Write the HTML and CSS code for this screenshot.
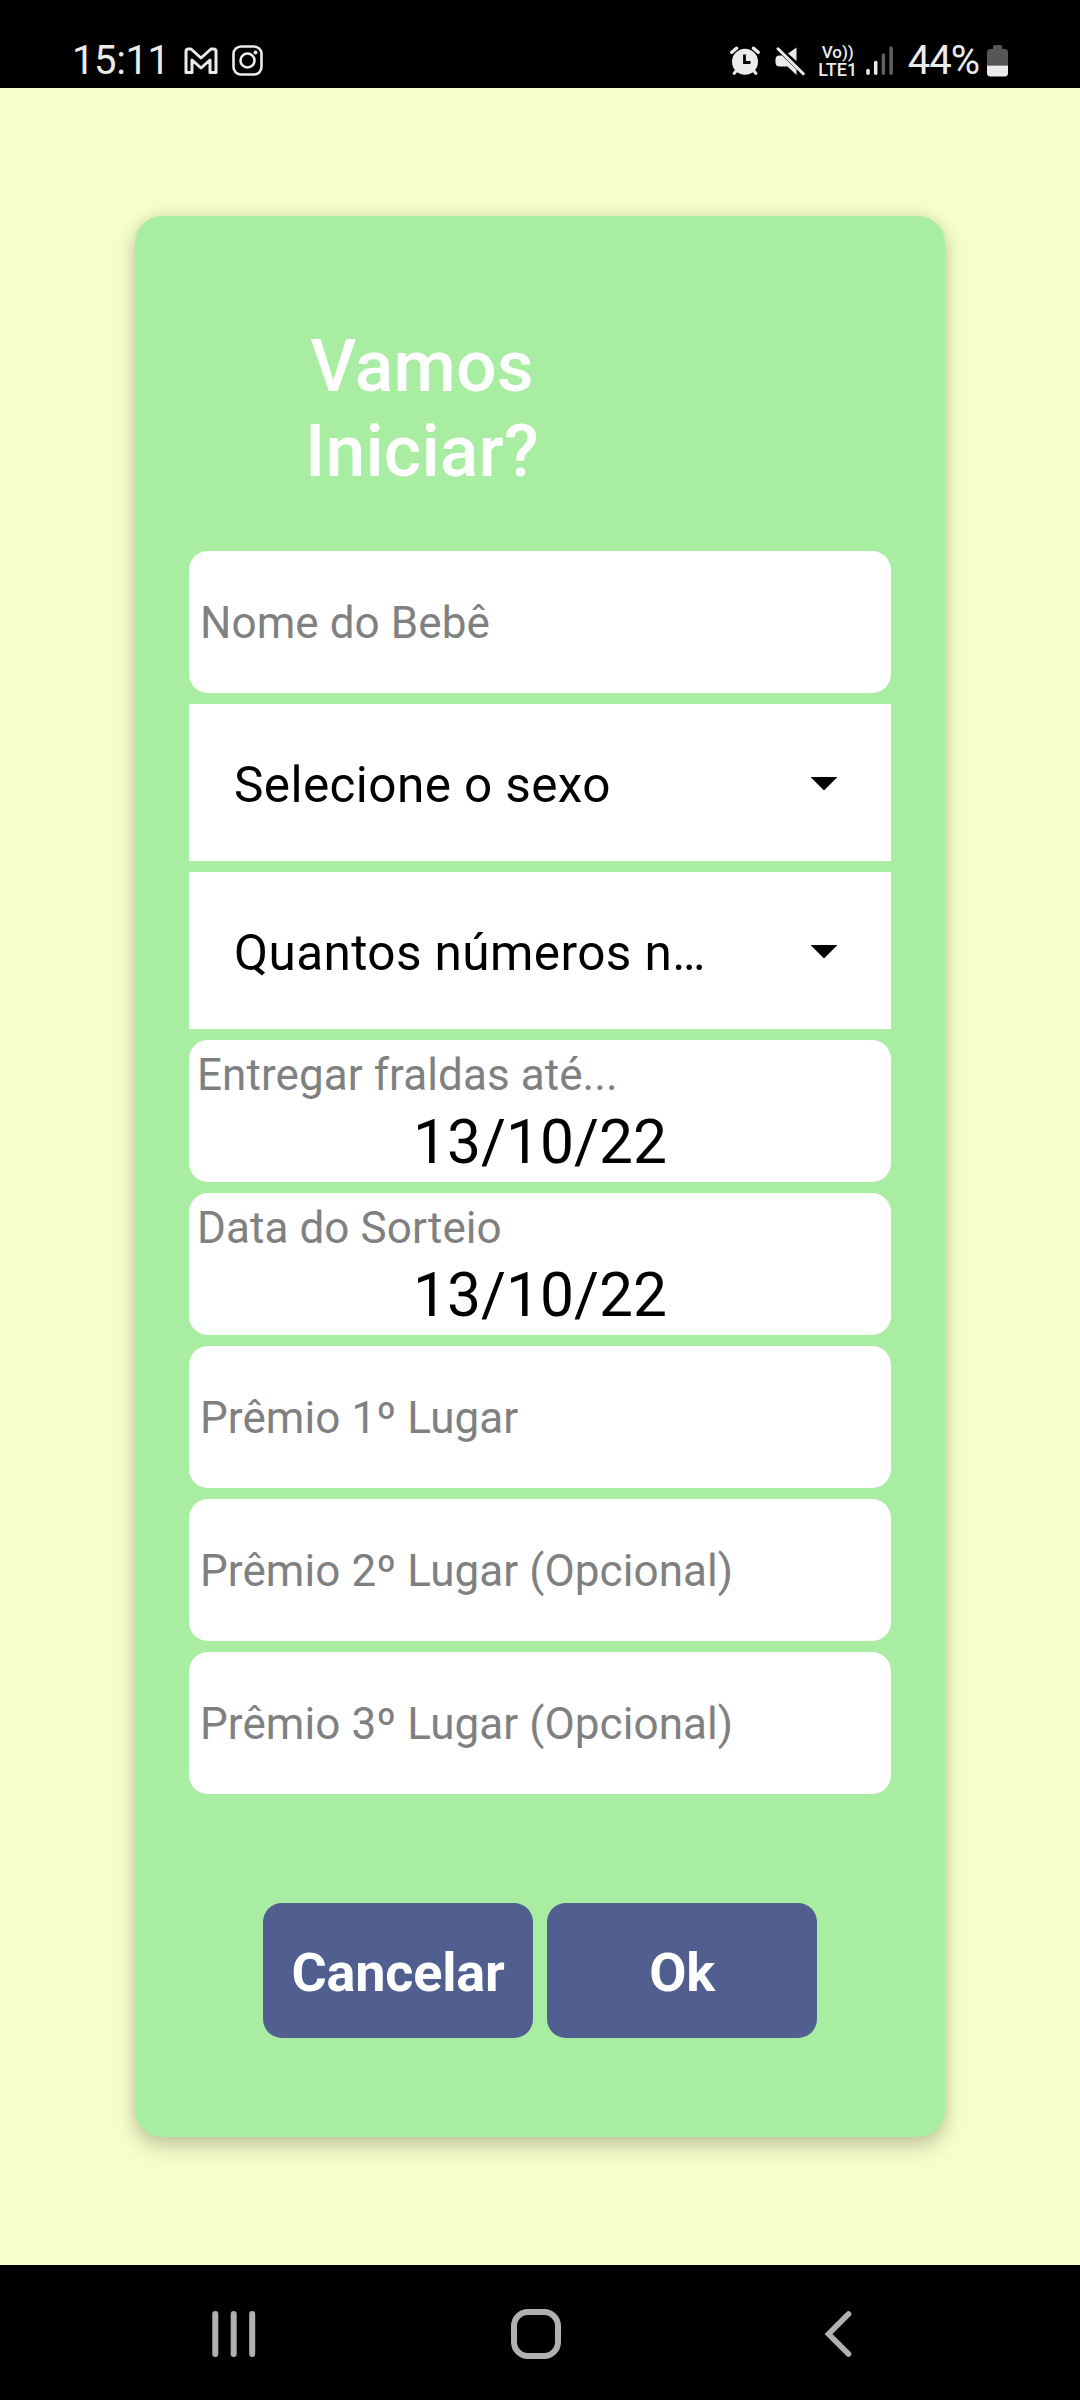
FILE: index.html
```html
<!DOCTYPE html>
<html lang="pt-BR">
<head>
<meta charset="utf-8">
<title>Vamos Iniciar?</title>
<link rel="stylesheet" href="styles.css">
</head>
<body>
<div class="screen">
  <header class="status-bar">
    <span class="clock">15:11</span>
    <svg class="icon-gmail" width="34" height="28" viewBox="0 0 34 28"><path d="M2 4.500Q2 2 4.500 2H7L17 11 27 2h2.500Q32 2 32 4.500V25.500H26V13L17 21 8 13V25.500H2Z" fill="none" stroke="#ebebeb" stroke-width="3" stroke-linejoin="round"/></svg>
    <svg class="icon-insta" width="31" height="31" viewBox="0 0 31 31"><rect x="1.500" y="1.500" width="28" height="28" rx="7.500" fill="none" stroke="#ebebeb" stroke-width="2.600"/><circle cx="15.500" cy="15.500" r="7" fill="none" stroke="#ebebeb" stroke-width="2.600"/><circle cx="23.500" cy="7.500" r="2" fill="#ebebeb"/></svg>
    <span class="spacer"></span>
    <svg class="icon-alarm" width="30" height="30" viewBox="0 0 30 30"><g stroke="#ebebeb" fill="none" stroke-linecap="round"><path d="M1.800 6.300L6.500 2.200M28.200 6.300L23.500 2.200" stroke-width="3.400"/><path d="M7 24L4.200 27.200M23 24l2.800 3.200" stroke-width="3.200"/></g><circle cx="15" cy="15.800" r="13" fill="#ebebeb"/><path d="M14.500 8.500v8h6" fill="none" stroke="#000" stroke-width="2.800"/></svg>
    <svg class="icon-mute" width="30" height="30" viewBox="0 0 30 30"><path d="M21.500 1.500V15L13 7.500ZM4.500 9.500H7L21.500 23.500V29L12.500 20.500H4.500Q.500 20.500 .500 16.500V13.500Q.500 9.500 4.500 9.500Z" fill="#ebebeb"/><path d="M3 2.800L28.300 27.800" stroke="#ebebeb" stroke-width="3" stroke-linecap="round"/></svg>
    <span class="volte"><span class="volte-top">Vo))</span><span class="volte-bottom">LTE1</span></span>
    <svg class="icon-signal" width="28" height="30" viewBox="0 0 28 30"><g stroke-width="3.500" stroke-linecap="round"><path d="M2 24.500V27.200M9.700 16.500V27.200" stroke="#ebebeb"/><path d="M17.400 9V27.200M25.100 2V27.200" stroke="#606060"/></g></svg>
    <span class="percent">44%</span>
    <svg class="icon-battery" width="21" height="32" viewBox="0 0 21 32"><path d="M7.500 0h6Q15 0 15 2V4h2.500Q21 4 21 7.500V20.500H0V7.500Q0 4 3.500 4H6V2Q6 0 7.500 0Z" fill="#565656"/><path d="M0 20.500H21V28Q21 31.500 17.500 31.500H3.500Q0 31.500 0 28Z" fill="#ebebeb"/></svg>
  </header>

  <main class="content">
    <section class="card">
      <h1 class="title">Vamos Iniciar?</h1>
      <form class="fields">
        <div class="field input"><span>Nome do Bebê</span></div>
        <div class="select"><span>Selecione o sexo</span><i class="arrow"></i></div>
        <div class="select"><span>Quantos números n…</span><i class="arrow"></i></div>
        <div class="field date"><span class="label">Entregar fraldas até...</span><span class="value">13/10/22</span></div>
        <div class="field date"><span class="label">Data do Sorteio</span><span class="value">13/10/22</span></div>
        <div class="field input"><span>Prêmio 1º Lugar</span></div>
        <div class="field input"><span>Prêmio 2º Lugar (Opcional)</span></div>
        <div class="field input"><span>Prêmio 3º Lugar (Opcional)</span></div>
      </form>
      <div class="actions">
        <div class="button">Cancelar</div>
        <div class="button">Ok</div>
      </div>
    </section>
  </main>

  <nav class="nav-bar">
    <svg width="46" height="50" viewBox="0 0 46 50"><path d="M4.300 5V45M22.700 5V45M41.200 5V45" stroke="#b0b0b0" stroke-width="6" stroke-linecap="round"/></svg>
    <svg width="50" height="50" viewBox="0 0 50 50"><rect x="3" y="3" width="44" height="44" rx="14" fill="none" stroke="#b0b0b0" stroke-width="6"/></svg>
    <svg width="30" height="50" viewBox="0 0 30 50"><path d="M25.500 5L5.500 25L25.500 45" fill="none" stroke="#b0b0b0" stroke-width="5.600" stroke-linecap="round"/></svg>
  </nav>
</div>
</body>
</html>
```
FILE: styles.css
```css
* { box-sizing: border-box; }

body {
  margin: 0;
  font-family: Roboto, "Liberation Sans", sans-serif;
}

.screen {
  width: 1080px;
  height: 2400px;
  display: flex;
  flex-direction: column;
  overflow: hidden;
}

.status-bar {
  height: 88px;
  padding: 33px 72px 0;
  display: flex;
  align-items: center;
  background: #000;
  color: #ebebeb;
}

.status-bar svg { flex: none; }

.clock, .percent {
  font-size: 40px;
  line-height: 56px;
}

.clock { letter-spacing: -0.4px; }

.icon-gmail { margin-left: 14px; }
.icon-insta { margin-left: 14px; }
.spacer { flex: 1; }
.icon-mute { margin-left: 15px; }

.volte {
  margin-left: 13px;
  width: 40px;
  display: flex;
  flex-direction: column;
  align-items: center;
  font-weight: 500;
  line-height: 18px;
  white-space: nowrap;
}

.volte-top { font-size: 17px; }
.volte-bottom { font-size: 18px; }

.icon-signal { margin-left: 8px; }

.percent {
  margin-left: 14px;
  letter-spacing: -1px;
}

.icon-battery { margin-left: 8px; }

.content {
  flex: 1;
  padding: 128px 135px;
  background: #f5ffcb;
}

.card {
  height: 1921px;
  padding: 108px 54px 0;
  border-radius: 27px;
  background: #a9eda2;
  box-shadow: 0 10px 20px rgba(40, 10, 30, 0.2), 0 0 16px rgba(40, 10, 30, 0.1);
}

.title {
  width: 300px;
  height: 227px;
  margin: 0 0 0 83px;
  text-align: center;
  color: #fff;
  font-size: 71.500px;
  font-weight: 500;
  line-height: 85px;
  letter-spacing: 0.2px;
}

.fields {
  display: flex;
  flex-direction: column;
  gap: 11px;
}

.field {
  height: 142px;
  border-radius: 19px;
  background: #fff;
  color: #808080;
  font-size: 44px;
  letter-spacing: 0.08px;
}

.input {
  display: flex;
  align-items: center;
  padding: 2px 10px 0 11px;
}

.select {
  height: 157px;
  padding: 4px 53px 0 45px;
  display: flex;
  align-items: center;
  justify-content: space-between;
  background: #fff;
  color: #000;
  font-size: 49.500px;
  letter-spacing: 0.4px;
}

.arrow {
  width: 28px;
  height: 14px;
  margin-bottom: 2px;
  background: #000;
  clip-path: polygon(0 0, 100% 0, 50% 100%);
}

.date {
  display: flex;
  flex-direction: column;
  padding: 9px 8px 0;
}

.label { line-height: 52px; }

.value {
  margin-top: 6px;
  text-align: center;
  color: #000;
  font-size: 60.500px;
  line-height: 72px;
  letter-spacing: 0;
}

.actions {
  margin-top: 109px;
  display: flex;
  justify-content: center;
  gap: 14px;
}

.button {
  width: 270px;
  height: 135px;
  padding-top: 4px;
  display: flex;
  align-items: center;
  justify-content: center;
  border-radius: 19px;
  background: #515f90;
  color: #fff;
  font-size: 54px;
  font-weight: 700;
  letter-spacing: -0.2px;
}

.nav-bar {
  height: 135px;
  padding: 3px 91px 0 83px;
  display: grid;
  grid-template-columns: repeat(3, 302px);
  place-items: center;
  background: #000;
}
```
